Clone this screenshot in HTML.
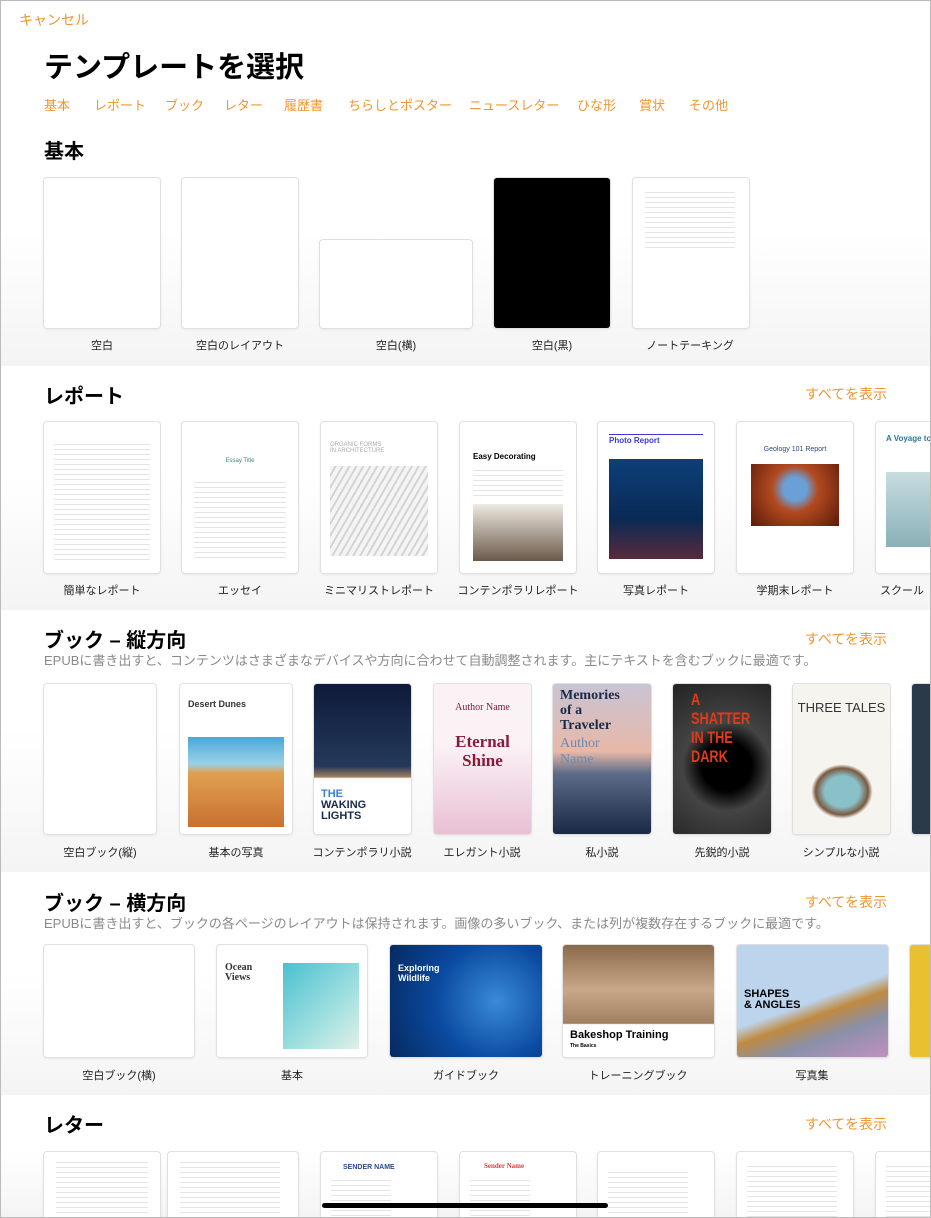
<!DOCTYPE html>
<html><head><meta charset="utf-8">
<style>
*{margin:0;padding:0;box-sizing:border-box}
html,body{width:931px;height:1218px;overflow:hidden}
body{position:relative;background:#fff;font-family:"Liberation Sans","Noto Sans CJK JP",sans-serif;color:#000}
.a{position:absolute}
.sec{position:absolute;left:0;width:931px;background:linear-gradient(#fff 45%,#f4f4f4)}
.o{color:#f0962f}
.h{position:absolute;left:44px;font-size:20px;font-weight:bold}
.all{position:absolute;right:44px;font-size:14px;color:#f0962f}
.sub{position:absolute;left:44px;font-size:13px;color:#8a8a8a}
.c{position:absolute;background:#fff;border-radius:3px;box-shadow:0 0 0 1px #e0e0e0,0 1px 3px rgba(0,0,0,.12);overflow:hidden}
.l{position:absolute;font-size:11px;text-align:center;color:#222}
.tx{position:absolute;background:repeating-linear-gradient(#e4e4e4 0 1px,transparent 1px 5px)}
</style></head><body>
<div class="a o" style="left:19px;top:10px;font-size:14px">キャンセル</div>
<div class="a" style="left:44px;top:44px;font-size:29px;font-weight:bold">テンプレートを選択</div>
<div class="a o" style="left:44px;top:95px;font-size:13px;white-space:nowrap">
<span style="position:absolute;left:0">基本</span><span style="position:absolute;left:50px">レポート</span><span style="position:absolute;left:121px">ブック</span><span style="position:absolute;left:180px">レター</span><span style="position:absolute;left:240px">履歴書</span><span style="position:absolute;left:304px">ちらしとポスター</span><span style="position:absolute;left:425px">ニュースレター</span><span style="position:absolute;left:533px">ひな形</span><span style="position:absolute;left:595px">賞状</span><span style="position:absolute;left:645px">その他</span></div>

<div class="sec" style="top:120px;height:246px"></div>
<div class="h" style="top:135px">基本</div>
<div class="c" style="left:44px;top:178px;width:116px;height:150px"></div>
<div class="c" style="left:182px;top:178px;width:116px;height:150px"></div>
<div class="c" style="left:320px;top:240px;width:152px;height:88px"></div>
<div class="c" style="left:494px;top:178px;width:116px;height:150px;background:#000"></div>
<div class="c" style="left:633px;top:178px;width:116px;height:150px"><div class="tx" style="left:12px;top:14px;width:90px;height:60px"></div></div>
<div class="l" style="left:44px;top:337px;width:116px">空白</div>
<div class="l" style="left:170px;top:337px;width:140px">空白のレイアウト</div>
<div class="l" style="left:320px;top:337px;width:152px">空白(横)</div>
<div class="l" style="left:494px;top:337px;width:116px">空白(黒)</div>
<div class="l" style="left:620px;top:337px;width:140px">ノートテーキング</div>

<div class="sec" style="top:366px;height:244px"></div>
<div class="h" style="top:380px">レポート</div><div class="all" style="top:384px">すべてを表示</div>
<div class="c" style="left:44px;top:422px;width:116px;height:151px"><div class="tx" style="left:10px;top:22px;width:96px;height:120px"></div></div>
<div class="c" style="left:182px;top:422px;width:116px;height:151px"><div class="a" style="left:0;top:36px;width:116px;text-align:center;font-size:6px;color:#3a8a7a">Essay Title</div><div class="tx" style="left:12px;top:60px;width:92px;height:80px"></div></div>
<div class="c" style="left:321px;top:422px;width:116px;height:151px"><div class="a" style="left:9px;top:20px;font-size:6px;color:#aaa">ORGANIC FORMS<br>IN ARCHITECTURE</div><div class="a" style="left:9px;top:44px;width:98px;height:90px;background:repeating-linear-gradient(120deg,#f4f4f4 0 4px,#d4d4d4 4px 6px)"></div></div>
<div class="c" style="left:460px;top:422px;width:116px;height:151px"><div class="a" style="left:13px;top:30px;font-size:8px;font-weight:bold">Easy Decorating</div><div class="tx" style="left:13px;top:48px;width:90px;height:28px"></div><div class="a" style="left:13px;top:82px;width:90px;height:57px;background:linear-gradient(#ede9e2,#6b5a4a)"></div></div>
<div class="c" style="left:598px;top:422px;width:116px;height:151px"><div class="a" style="left:11px;top:14px;font-size:8px;font-weight:bold;color:#3a3ad8">Photo Report</div><div class="a" style="left:11px;top:12px;width:94px;height:1px;background:#3a3ad8"></div><div class="a" style="left:11px;top:37px;width:94px;height:100px;background:linear-gradient(#0d3f7a,#0a2a55 60%,#5a2a3a)"></div></div>
<div class="c" style="left:737px;top:422px;width:116px;height:151px"><div class="a" style="left:0;top:24px;width:116px;text-align:center;font-size:7px;color:#2a4a7a">Geology 101 Report</div><div class="a" style="left:14px;top:42px;width:88px;height:62px;background:radial-gradient(circle at 50% 40%,#6aa0d8 20%,#b34a20 40%,#5a1a0a)"></div></div>
<div class="c" style="left:876px;top:422px;width:80px;height:151px"><div class="a" style="left:10px;top:12px;font-size:8px;font-weight:bold;color:#2a7a9a;white-space:nowrap">A Voyage to</div><div class="a" style="left:10px;top:50px;width:70px;height:75px;background:linear-gradient(#c8dde0,#8ab0b8)"></div></div>
<div class="l" style="left:32px;top:582px;width:140px">簡単なレポート</div>
<div class="l" style="left:170px;top:582px;width:140px">エッセイ</div>
<div class="l" style="left:309px;top:582px;width:140px">ミニマリストレポート</div>
<div class="l" style="left:448px;top:582px;width:140px">コンテンポラリレポート</div>
<div class="l" style="left:586px;top:582px;width:140px">写真レポート</div>
<div class="l" style="left:725px;top:582px;width:140px">学期末レポート</div>
<div class="l" style="left:880px;top:582px;width:80px;text-align:left">スクール</div>

<div class="sec" style="top:610px;height:262px"></div>
<div class="h" style="top:624px">ブック – 縦方向</div><div class="all" style="top:629px">すべてを表示</div>
<div class="sub" style="top:650px">EPUBに書き出すと、コンテンツはさまざまなデバイスや方向に合わせて自動調整されます。主にテキストを含むブックに最適です。</div>
<div class="c" style="left:44px;top:684px;width:112px;height:150px"></div>
<div class="c" style="left:180px;top:684px;width:112px;height:150px"><div class="a" style="left:8px;top:15px;font-size:9px;font-weight:bold;color:#333">Desert Dunes</div><div class="a" style="left:8px;top:53px;width:96px;height:90px;background:linear-gradient(#4aa8d8,#9ad0e8 30%,#e0a050 40%,#c87030)"></div></div>
<div class="c" style="left:314px;top:684px;width:97px;height:150px;background:linear-gradient(#0e1a3a,#243a5a 55%,#a08060 62%,#fff 63%)"><div class="a" style="left:7px;top:105px;font-size:11px;font-weight:bold;line-height:11px;color:#3a80d0">THE<br><span style="color:#1a2a4a">WAKING<br>LIGHTS</span></div></div>
<div class="c" style="left:434px;top:684px;width:97px;height:150px;background:linear-gradient(#fbf2f6 40%,#e8c0d4)"><div class="a" style="left:0;top:18px;width:97px;text-align:center;font-family:'Liberation Serif',serif;font-size:10px;color:#8a1a3a">Author Name</div><div class="a" style="left:0;top:48px;width:97px;text-align:center;font-family:'Liberation Serif',serif;font-size:17px;font-weight:bold;line-height:19px;color:#8a1a3a">Eternal<br>Shine</div></div>
<div class="c" style="left:553px;top:684px;width:98px;height:150px;background:linear-gradient(#c8c4d4,#e8b8a8 45%,#5a6a88 60%,#1a2a44)"><div class="a" style="left:7px;top:4px;font-family:'Liberation Serif',serif;font-size:14px;line-height:15px;color:#1a2a4a;font-weight:bold">Memories<br>of a<br>Traveler</div><div class="a" style="left:7px;top:52px;font-family:'Liberation Serif',serif;font-size:14px;line-height:16px;color:#6a8ab0">Author<br>Name</div></div>
<div class="c" style="left:673px;top:684px;width:98px;height:150px;background:radial-gradient(circle at 55% 55%,#000 25%,#444 45%,#222)"><div class="a" style="left:18px;top:6px;font-size:17px;font-weight:bold;line-height:19px;color:#e03a1a;transform:scaleX(.75);transform-origin:left">A<br>SHATTER<br>IN THE<br>DARK</div></div>
<div class="c" style="left:793px;top:684px;width:97px;height:150px;background:#f6f4ee"><div class="a" style="left:0;top:16px;width:97px;text-align:center;font-size:13px;color:#333">THREE TALES</div><div class="a" style="left:18px;top:80px;width:62px;height:55px;border-radius:50%;background:radial-gradient(#8ac0c8 40%,#7a5a40 60%,transparent 70%)"></div></div>
<div class="c" style="left:912px;top:684px;width:40px;height:150px;background:#2a3a4a"></div>
<div class="l" style="left:30px;top:844px;width:140px">空白ブック(縦)</div>
<div class="l" style="left:166px;top:844px;width:140px">基本の写真</div>
<div class="l" style="left:292px;top:844px;width:140px">コンテンポラリ小説</div>
<div class="l" style="left:412px;top:844px;width:140px">エレガント小説</div>
<div class="l" style="left:532px;top:844px;width:140px">私小説</div>
<div class="l" style="left:652px;top:844px;width:140px">先鋭的小説</div>
<div class="l" style="left:771px;top:844px;width:140px">シンプルな小説</div>

<div class="sec" style="top:872px;height:223px"></div>
<div class="h" style="top:887px">ブック – 横方向</div><div class="all" style="top:892px">すべてを表示</div>
<div class="sub" style="top:913px">EPUBに書き出すと、ブックの各ページのレイアウトは保持されます。画像の多いブック、または列が複数存在するブックに最適です。</div>
<div class="c" style="left:44px;top:945px;width:150px;height:112px"></div>
<div class="c" style="left:217px;top:945px;width:150px;height:112px"><div class="a" style="left:8px;top:18px;font-family:'Liberation Serif',serif;font-size:10px;font-weight:bold;line-height:10px;color:#333">Ocean<br>Views</div><div class="a" style="left:66px;top:18px;width:76px;height:86px;background:linear-gradient(135deg,#4ac0d0,#a0e0e0 60%,#e0f0e8)"></div></div>
<div class="c" style="left:390px;top:945px;width:152px;height:112px;background:radial-gradient(circle at 70% 50%,#3a8ad8,#0a4aa0 50%,#062a60)"><div class="a" style="left:8px;top:18px;font-size:9px;font-weight:bold;line-height:10px;color:#fff">Exploring<br>Wildlife</div></div>
<div class="c" style="left:563px;top:945px;width:151px;height:112px;background:linear-gradient(#8a6a4a,#c8a888 40%,#a08060 70%,#fff 71%)"><div class="a" style="left:7px;top:84px;font-size:11px;font-weight:bold">Bakeshop Training</div><div class="a" style="left:7px;top:98px;font-size:5px;font-weight:bold">The Basics</div></div>
<div class="c" style="left:737px;top:945px;width:151px;height:112px;background:linear-gradient(160deg,#bcd4ec 50%,#c08a40 60%,#8a90a8 75%,#c090c0)"><div class="a" style="left:7px;top:44px;font-size:11px;font-weight:bold;line-height:11px">SHAPES<br>&amp; ANGLES</div></div>
<div class="c" style="left:910px;top:945px;width:40px;height:112px;background:#e8c030"></div>
<div class="l" style="left:49px;top:1067px;width:140px">空白ブック(横)</div>
<div class="l" style="left:222px;top:1067px;width:140px">基本</div>
<div class="l" style="left:396px;top:1067px;width:140px">ガイドブック</div>
<div class="l" style="left:568px;top:1067px;width:140px">トレーニングブック</div>
<div class="l" style="left:742px;top:1067px;width:140px">写真集</div>

<div class="sec" style="top:1095px;height:123px"></div>
<div class="h" style="top:1109px">レター</div><div class="all" style="top:1114px">すべてを表示</div>
<div class="c" style="left:44px;top:1152px;width:116px;height:80px"><div class="tx" style="left:12px;top:10px;width:92px;height:60px"></div></div>
<div class="c" style="left:168px;top:1152px;width:130px;height:80px"><div class="tx" style="left:12px;top:10px;width:100px;height:60px"></div></div>
<div class="c" style="left:321px;top:1152px;width:116px;height:80px"><div class="a" style="left:22px;top:12px;font-size:7px;font-weight:bold;color:#2a4a8a">SENDER NAME</div><div class="tx" style="left:10px;top:28px;width:60px;height:40px"></div></div>
<div class="c" style="left:460px;top:1152px;width:116px;height:80px"><div class="a" style="left:24px;top:10px;font-size:7px;font-family:'Liberation Serif',serif;font-weight:bold;color:#d04040">Sender Name</div><div class="tx" style="left:10px;top:28px;width:60px;height:40px"></div></div>
<div class="c" style="left:598px;top:1152px;width:116px;height:80px"><div class="tx" style="left:10px;top:20px;width:80px;height:48px"></div></div>
<div class="c" style="left:737px;top:1152px;width:116px;height:80px"><div class="tx" style="left:10px;top:14px;width:90px;height:54px"></div></div>
<div class="c" style="left:876px;top:1152px;width:80px;height:80px"><div class="tx" style="left:10px;top:14px;width:70px;height:54px"></div></div>
<div class="a" style="left:322px;top:1203px;width:286px;height:5px;border-radius:3px;background:#000"></div>
<div class="a" style="left:0;top:0;width:931px;height:1218px;border:1px solid #bbb;pointer-events:none"></div>
</body></html>
